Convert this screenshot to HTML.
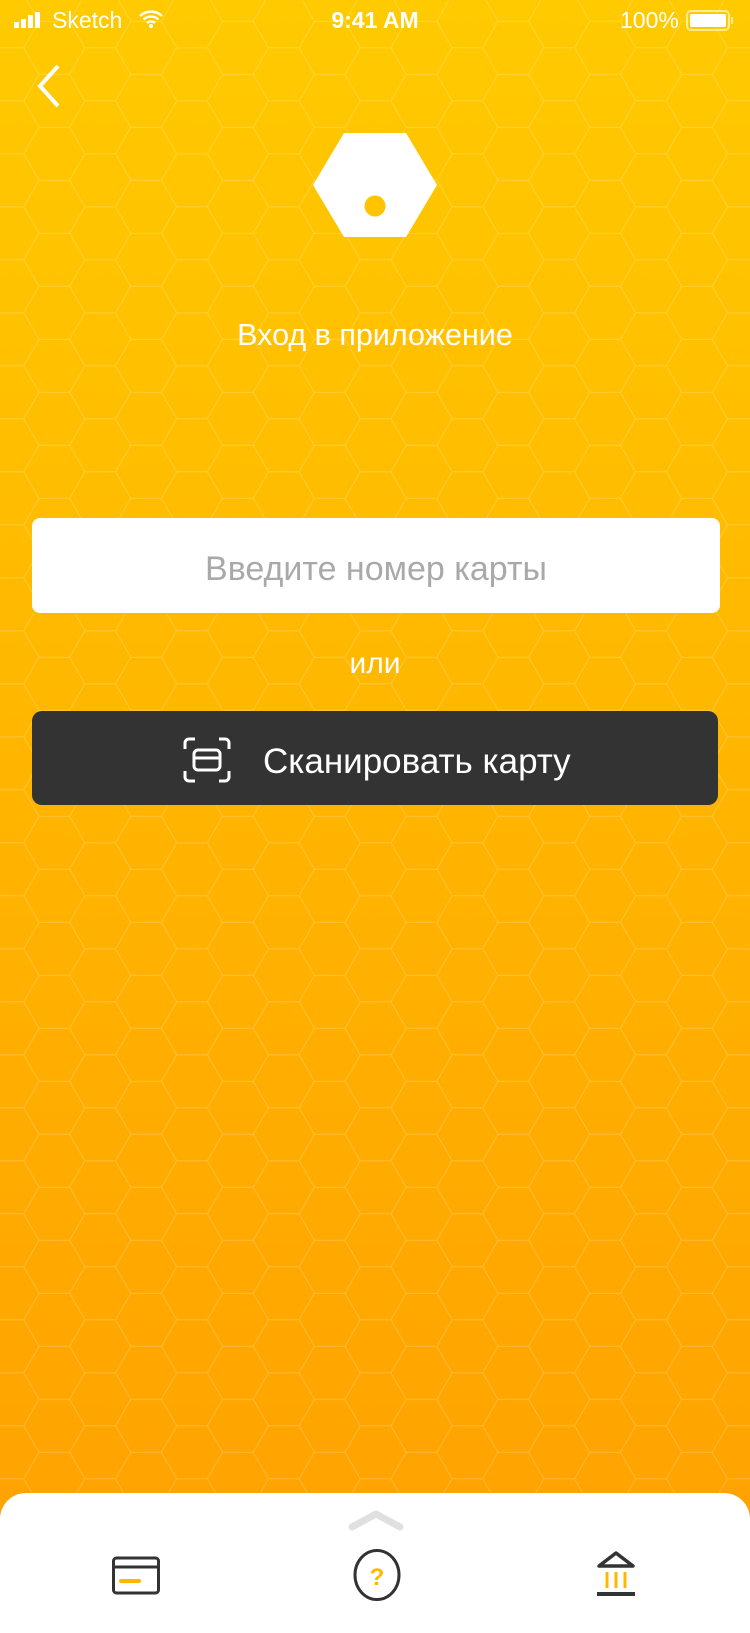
<!DOCTYPE html>
<html><head><meta charset="utf-8"><style>
*{margin:0;padding:0;box-sizing:border-box}
body{width:750px;height:1624px;position:relative;overflow:hidden;font-family:"Liberation Sans",sans-serif;background:linear-gradient(180deg,#FFCA00 0%,#FFB400 50%,#FFA000 100%)}
.abs{position:absolute}
.sb{top:5px;font-size:23px;color:#fff;height:30px;line-height:30px}
</style></head><body>
<svg class="abs" style="left:0;top:0" width="750" height="1624">
<defs><pattern id="hx" width="91.8" height="53" patternUnits="userSpaceOnUse" x="23.7" y="21.3">
<path d="M15.3 0L45.9 0L61.2 26.5L45.9 53L15.3 53L0 26.5Z M61.2 26.5L91.8 26.5" fill="none" stroke="rgba(255,255,255,0.22)" stroke-width="1"/>
</pattern></defs>
<rect width="750" height="1624" fill="url(#hx)"/>
</svg>
<svg class="abs" style="left:14px;top:12px" width="32" height="16"><rect x="0" y="10" width="5" height="6" fill="#fff"/><rect x="7" y="7" width="5" height="9" fill="#fff"/><rect x="14" y="3" width="5" height="13" fill="#fff"/><rect x="21" y="0" width="5" height="16" fill="#fff"/></svg>
<div class="abs sb" style="left:52px">Sketch</div>
<svg class="abs" style="left:139px;top:10px" width="24" height="18" viewBox="0 0 24 18"><path d="M1 6a16 16 0 0 1 22 0M4.5 9.5a11 11 0 0 1 15 0M8 13a6 6 0 0 1 8 0" stroke="#fff" stroke-width="2.4" fill="none"/><circle cx="12" cy="16" r="2" fill="#fff"/></svg>
<div class="abs sb" style="left:0;width:750px;text-align:center;font-weight:bold;font-size:23px">9:41 AM</div>
<div class="abs sb" style="left:620px">100%</div>
<div class="abs" style="left:686px;top:10px;width:44px;height:21px;border:2px solid rgba(255,255,255,.6);border-radius:5px;padding:2px"><div style="width:100%;height:100%;background:#fff;border-radius:2px"></div></div>
<div class="abs" style="left:731px;top:17px;width:2px;height:7px;background:rgba(255,255,255,.6)"></div>
<svg class="abs" style="left:34px;top:64px" width="30" height="44"><path d="M24 2L6 22L24 42" stroke="#fff" stroke-width="4" fill="none"/></svg>
<svg class="abs" style="left:313px;top:133px" width="124" height="104" viewBox="0 0 124 104"><path d="M31 0L93 0L124 52L93 104L31 104L0 52Z" fill="#fff"/><circle cx="62" cy="73" r="10.5" fill="#FFC400"/></svg>
<div class="abs" style="left:0;width:750px;top:318px;text-align:center;color:#fff;font-size:30.5px">Вход в приложение</div>
<div class="abs" style="left:32px;top:518px;width:688px;height:95px;background:#fff;border-radius:8px;text-align:center;line-height:102px;color:#a9a9a9;font-size:34px">Введите номер карты</div>
<div class="abs" style="left:0;width:750px;top:647px;text-align:center;color:#fff;font-size:30px">или</div>
<div class="abs" style="left:32px;top:711px;width:686px;height:94px;background:#333;border-radius:10px"></div>
<svg class="abs" style="left:183px;top:737px" width="48" height="46" viewBox="0 0 48 46" fill="none" stroke="#fff" stroke-width="3"><path d="M2 12V6a4 4 0 0 1 4-4h6M36 2h6a4 4 0 0 1 4 4v6M46 34v6a4 4 0 0 1-4 4h-6M12 44H6a4 4 0 0 1-4-4v-6"/><rect x="11" y="13" width="26" height="20" rx="4"/><path d="M11 21h26"/></svg>
<div class="abs" style="left:263px;top:741px;color:#fff;font-size:35px;line-height:42px">Сканировать карту</div>
<div class="abs" style="left:0;top:1493px;width:750px;height:140px;background:#fff;border-radius:26px 26px 0 0"></div>
<svg class="abs" style="left:348px;top:1508px" width="56" height="24"><path d="M4 19L28 6L52 19" stroke="#e0e0e0" stroke-width="7" stroke-linecap="round" stroke-linejoin="round" fill="none"/></svg>
<svg class="abs" style="left:111px;top:1555px" width="50" height="50" viewBox="0 0 50 50" fill="none"><rect x="2.5" y="3" width="45" height="35" rx="3" stroke="#333" stroke-width="3"/><path d="M2.5 12h45" stroke="#333" stroke-width="3"/><path d="M10 26h18" stroke="#FFB800" stroke-width="4" stroke-linecap="round"/></svg>
<svg class="abs" style="left:352px;top:1548px" width="50" height="54" viewBox="0 0 50 54" fill="none"><ellipse cx="25" cy="27" rx="22" ry="24.5" stroke="#333" stroke-width="3"/><text x="25" y="37" text-anchor="middle" font-family="Liberation Sans" font-weight="bold" font-size="24" fill="#FFB800">?</text></svg>
<svg class="abs" style="left:594px;top:1549px" width="44" height="48" viewBox="0 0 44 48" fill="none"><path d="M5 17L22 4L39 17Z" stroke="#333" stroke-width="3.5" stroke-linejoin="round"/><path d="M13 23v16M22 23v16M31 23v16" stroke="#FFB800" stroke-width="3"/><path d="M3 45h38" stroke="#333" stroke-width="4"/></svg>
</body></html>
